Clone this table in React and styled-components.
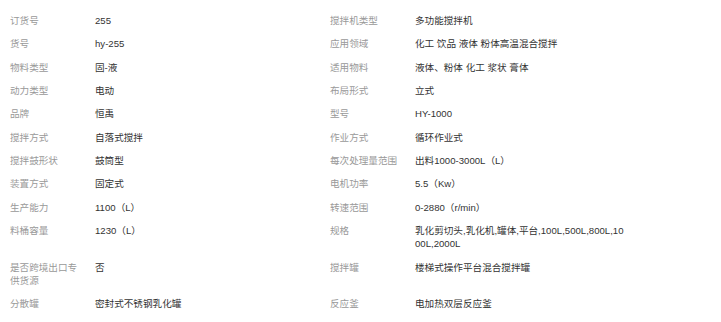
import React from "react";
import styled, { createGlobalStyle } from "styled-components";

const Global = createGlobalStyle`
  html, body { margin: 0; padding: 0; background: #fff; }
  body { font-family: Arial, "Liberation Sans", "Noto Sans CJK SC", sans-serif; }
`;

const Panel = styled.div`
  width: 721px;
  box-sizing: border-box;
  padding: 8.6px 0 6.5px 10px;
  border-bottom: 1px solid #e8e8e8;
`;

const Grid = styled.div`
  display: grid;
  grid-template-columns: 85px 235px 85px 235px;
  font-size: 9.6px;
  line-height: 13px;
`;

const Label = styled.div`
  color: #999;
  padding: 5.2px 13px 5.2px 0;
  word-break: break-all;
`;

const Value = styled.div`
  color: #333;
  padding: 5.2px 24px 5.2px 0;
  word-break: break-all;
`;

const rows = [
  [["订货号", "255"], ["搅拌机类型", "多功能搅拌机"]],
  [["货号", "hy-255"], ["应用领域", "化工 饮品 液体 粉体高温混合搅拌"]],
  [["物料类型", "固-液"], ["适用物料", "液体、粉体 化工 浆状 膏体"]],
  [["动力类型", "电动"], ["布局形式", "立式"]],
  [["品牌", "恒禹"], ["型号", "HY-1000"]],
  [["搅拌方式", "自落式搅拌"], ["作业方式", "循环作业式"]],
  [["搅拌鼓形状", "鼓筒型"], ["每次处理量范围", "出料1000-3000L（L）"]],
  [["装置方式", "固定式"], ["电机功率", "5.5（Kw）"]],
  [["生产能力", "1100（L）"], ["转速范围", "0-2880（r/min）"]],
  [["料桶容量", "1230（L）"], ["规格", "乳化剪切头,乳化机,罐体,平台,100L,500L,800L,1000L,2000L"]],
  [["是否跨境出口专供货源", "否"], ["搅拌罐", "楼梯式操作平台混合搅拌罐"]],
  [["分散罐", "密封式不锈钢乳化罐"], ["反应釜", "电加热双层反应釜"]],
];

export default function App() {
  return (
    <>
      <Global />
      <Panel>
        <Grid>
          {rows.map((r, i) =>
            r.map(([l, v], j) => (
              <React.Fragment key={`${i}-${j}`}>
                <Label>{l}</Label>
                <Value>{v}</Value>
              </React.Fragment>
            ))
          )}
        </Grid>
      </Panel>
    </>
  );
}
